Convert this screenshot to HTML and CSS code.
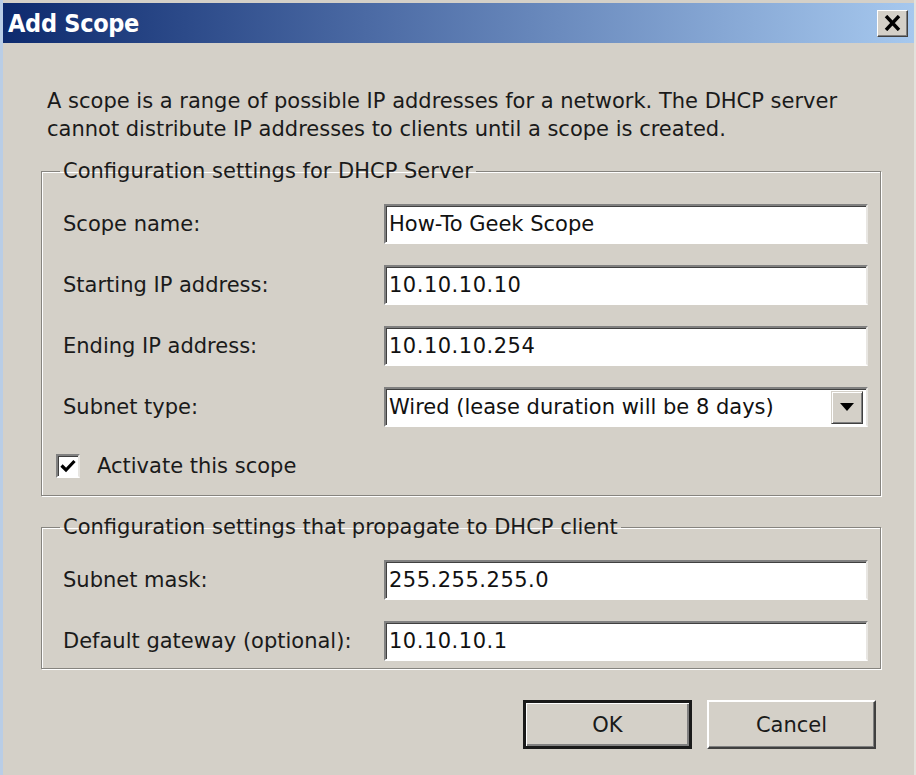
FILE: index.html
```html
<!DOCTYPE html>
<html lang="en">

<head>
  <meta charset="UTF-8">
  <meta name="viewport" content="width=device-width, initial-scale=1.0">
  <title>Add Scope</title>
  <link rel="stylesheet" href="styles.css">
</head>

<body>
  <div class="window">
    <!-- title bar -->
    <div class="title-bar">
      <span class="title">Add Scope</span>
      <button class="close-btn" aria-label="Close">
        <svg width="17" height="16" viewBox="0 0 17 16">
          <path d="M2 1 L15 15 M15 1 L2 15" stroke="#000" stroke-width="3.4" />
        </svg>
      </button>
    </div>

    <div class="content">
      <p class="intro">A scope is a range of possible IP addresses for a network. The DHCP server cannot distribute IP addresses to clients until a scope is created.</p>

      <fieldset class="group group-server">
        <legend>Configuration settings for DHCP Server</legend>
        <div class="form-grid">
          <label>Scope name:</label>
          <div class="field">How-To Geek Scope</div>
          <label>Starting IP address:</label>
          <div class="field ip">10.10.10.10</div>
          <label>Ending IP address:</label>
          <div class="field ip">10.10.10.254</div>
          <label>Subnet type:</label>
          <div class="field select">
            <span>Wired (lease duration will be 8 days)</span>
            <span class="drop-btn">
              <svg width="14" height="8" viewBox="0 0 14 8"><path d="M0 0 H14 L7 8 Z" fill="#000" /></svg>
            </span>
          </div>
        </div>
        <div class="check-row">
          <span class="checkbox">
            <svg width="16" height="14" viewBox="0 0 16 14"><path d="M1.5 6.5 L6 11 L14.5 2" fill="none" stroke="#000" stroke-width="3.2" /></svg>
          </span>
          <span>Activate this scope</span>
        </div>
      </fieldset>

      <fieldset class="group group-client">
        <legend>Configuration settings that propagate to DHCP client</legend>
        <div class="form-grid">
          <label>Subnet mask:</label>
          <div class="field ip">255.255.255.0</div>
          <label>Default gateway (optional):</label>
          <div class="field ip">10.10.10.1</div>
        </div>
      </fieldset>

      <div class="buttons">
        <button class="btn btn-default">OK</button>
        <button class="btn">Cancel</button>
      </div>
    </div>
  </div>
</body>

</html>
```

FILE: styles.css
```css
/* reset */
* {
  margin: 0;
  padding: 0;
  box-sizing: border-box;
}

body {
  background-color: #d4d0c8;
  font-family: "DejaVu Sans", sans-serif;
  font-size: 21px;
  color: #1a1a1a;
}

.window {
  width: 916px;
  height: 775px;
  padding-top: 3px;
  border-left: 3px solid #b9cde6;
  border-right: 2px solid #e4e2dc;
  background-color: #d4d0c8;
}

/* title bar */
.title-bar {
  display: flex;
  align-items: center;
  justify-content: space-between;
  height: 40px;
  padding: 0 6px 0 5px;
  background: linear-gradient(to right, #0d2a6e, #4b6aa4 40%, #a6c8ee);
}

.title {
  color: #fff;
  font-family: "DejaVu Sans Condensed", "DejaVu Sans", sans-serif;
  font-weight: bold;
  font-size: 25px;
  letter-spacing: -0.3px;
}

.close-btn {
  display: flex;
  align-items: center;
  justify-content: center;
  width: 31px;
  height: 27px;
  background-color: #d4d0c8;
  border: 1px solid;
  border-color: #fff #404040 #404040 #fff;
  box-shadow: inset -1px -1px 0 #808080;
}

/* body */
.content {
  padding: 44px 33px 0 38px;
}

.intro {
  padding-left: 6px;
  line-height: 28px;
  margin-bottom: 15px;
}

.group {
  border: 1px solid #86847f;
  box-shadow: inset 1px 1px 0 #fff, 1px 1px 0 #fff;
  padding: 20px 11px 17px 21px;
}

.group legend {
  margin-left: -3px;
  padding: 0 3px;
  line-height: 26px;
}

.group-client {
  margin-top: 18px;
  padding-bottom: 7px;
}

.form-grid {
  display: grid;
  grid-template-columns: 321px 484px;
  grid-auto-rows: 40px;
  row-gap: 21px;
  align-items: center;
}

.field {
  display: flex;
  align-items: center;
  height: 40px;
  padding-left: 3px;
  background-color: #fff;
  border: 2px solid;
  border-color: #808080 #e8e6e2 #fff #808080;
  box-shadow: inset 1px 1px 0 #404040;
  color: #111;
}

.ip {
  letter-spacing: 0.5px;
}

.select {
  justify-content: space-between;
  padding-right: 3px;
}

.drop-btn {
  display: flex;
  align-items: center;
  justify-content: center;
  width: 32px;
  height: 33px;
  background-color: #d4d0c8;
  border: 1px solid;
  border-color: #d4d0c8 #404040 #404040 #d4d0c8;
  box-shadow: inset 1px 1px 0 #fff, inset -1px -1px 0 #808080;
}

.check-row {
  display: flex;
  align-items: center;
  gap: 17px;
  margin: 27px 0 0 -7px;
}

.checkbox {
  display: flex;
  align-items: center;
  justify-content: center;
  width: 24px;
  height: 24px;
  background-color: #fff;
  border: 2px solid;
  border-color: #808080 #e8e6e2 #fff #808080;
  box-shadow: inset 1px 1px 0 #404040;
}

/* buttons */
.buttons {
  display: flex;
  justify-content: flex-end;
  gap: 15px;
  margin-top: 31px;
  padding-right: 5px;
}

.btn {
  width: 169px;
  height: 49px;
  font-family: inherit;
  font-size: 21px;
  color: #1a1a1a;
  background-color: #d4d0c8;
  border: 2px solid;
  border-color: #fff #404040 #404040 #fff;
  box-shadow: inset -1px -1px 0 #808080;
}

.btn-default {
  border: 3px solid #1a1a1a;
  box-shadow: inset 1px 1px 0 #fff, inset -2px -2px 0 #808080;
}
```
